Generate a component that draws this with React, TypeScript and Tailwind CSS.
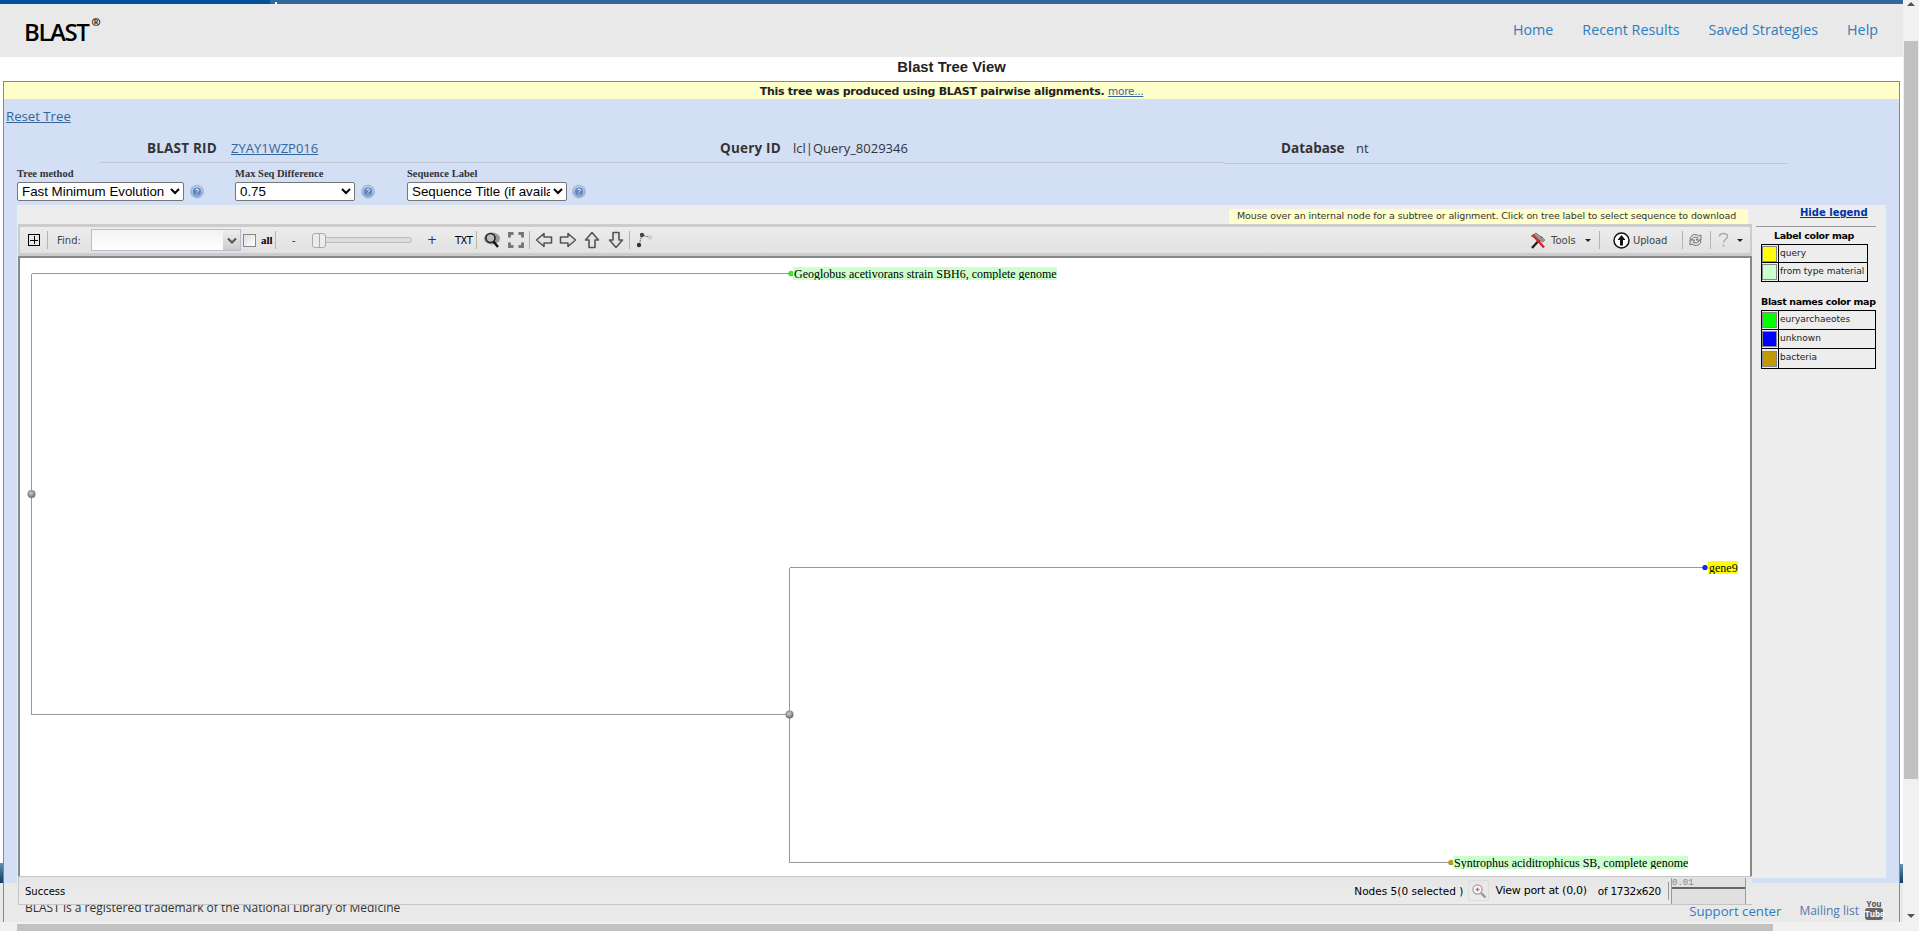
import React from "react";

const Sep = ({ className = "" }: { className?: string }) => <span className={`block w-px h-[18px] bg-[#b5b5a8] shrink-0 ${className}`} />;

function Help({ className = "" }: { className?: string }) {
  return (
    <svg width="14" height="15" viewBox="0 0 14 15" className={className}>
      <defs>
        <radialGradient id="hg" cx="50%" cy="40%" r="60%">
          <stop offset="0%" stopColor="#e8effa" />
          <stop offset="100%" stopColor="#7f9fce" />
        </radialGradient>
      </defs>
      <circle cx="7" cy="7.500" r="6.500" fill="url(#hg)" stroke="#a9bcdc" />
      <circle cx="7" cy="7.500" r="4" fill="#5f86bf" />
      <path d="M5.500 6.200c.2-1.500 3-1.500 3 .1 0 1-1.500 1-1.500 2.100M7 9.500v.9" stroke="#fff" strokeWidth="1" fill="none" />
    </svg>
  );
}

function Arrow({ rot }: { rot: number }) {
  return (
    <svg width="16" height="18" viewBox="0 0 16 18" style={{ transform: `rotate(${rot}deg)` }} className="shrink-0">
      <path d="M8 1.500 14.500 9H11v7.500H5V9H1.500Z" fill="#e4e4e4" stroke="#555" strokeWidth="1.600" strokeLinejoin="round" />
    </svg>
  );
}

function Caret() {
  return <span className="block w-0 h-0 border-l-[3px] border-r-[3px] border-t-[3px] border-l-transparent border-r-transparent border-t-[#222] shrink-0" />;
}

function Swatch({ color, label, w }: { color: string; label: string; w: string }) {
  return (
    <div className={`flex items-stretch border-b border-black last:border-b-0 ${w}`}>
      <div className="w-[15px] shrink-0 border-r border-black pr-px box-content flex items-center">
        <div className="w-[15px] h-[16px] border border-[#888]" style={{ backgroundColor: color }} />
      </div>
      <span className="pl-[1px] leading-[16px] text-[#222] whitespace-nowrap">{label}</span>
    </div>
  );
}

function TreeNode({ x, y, color }: { x: number; y: number; color: string }) {
  return <circle cx={x} cy={y} r="2.600" fill={color} stroke="#00000040" strokeWidth="0.5" />;
}

function TreeLabel({ x, y, bg, w, children }: { x: number; y: number; bg: string; w: number; children: React.ReactNode }) {
  return (
    <div
      className="absolute h-[13px] pl-px text-[12px] leading-[14px] text-black whitespace-nowrap font-['Liberation_Serif',serif] overflow-hidden"
      style={{ left: x, top: y, width: w, backgroundColor: bg }}
    >
      {children}
    </div>
  );
}

export default function App() {
  return (
    <div className="w-[1919px] h-[931px] overflow-hidden relative bg-white flex flex-col font-['Open_Sans',sans-serif]">
      <div className="flex flex-1 min-h-0">
        <div className="w-[1903px] flex flex-col shrink-0">
          {/* top strip */}
          <div className="h-[4px] flex shrink-0">
            <div className="w-[270px] bg-[#00529b]" />
            <div className="flex-1 bg-[#336699]" />
          </div>
          {/* header */}
          <header className="h-[53px] bg-[#e9e9e9] flex items-start justify-between shrink-0">
            <div className="pl-[24px] pt-[12px] flex items-start text-black">
              <span className="text-[24px] leading-[32px] font-semibold tracking-[-1.4px]">BLAST</span>
              <span className="text-[11px] leading-[12px] font-bold ml-[3px]">®</span>
            </div>
            <nav className="flex gap-[29px] pr-[25px] pt-[16px] text-[14.3px] leading-[20px] text-[#2f7bbf]">
              <span>Home</span>
              <span>Recent Results</span>
              <span>Saved Strategies</span>
              <span>Help</span>
            </nav>
          </header>
          {/* title */}
          <h1 className="h-[24px] shrink-0 text-center text-[14.8px] leading-[20px] font-bold text-[#222] font-['Liberation_Sans',sans-serif]">
            Blast Tree View
          </h1>
          {/* panel */}
          <main className="relative z-10 ml-[3px] w-[1897px] h-[802px] shrink-0 border-t border-l border-r border-[#888] bg-[#d3dff5]">
            <div className="h-[17px] bg-[#ffffcc] text-center text-[11px] leading-[18px] font-bold text-[#222] font-['DejaVu_Sans',sans-serif] tracking-[-0.27px]">
              This tree was produced using BLAST pairwise alignments.{" "}
              <span className="font-normal text-[#336699] underline text-[10.5px]">more...</span>
            </div>
            <div className="h-[36px] pl-[2px] pt-[8px] text-[13.2px] leading-[18px]">
              <span className="text-[#336699] underline">Reset Tree</span>
            </div>
            <div className="ml-[95px] flex h-[29px] text-[13px] leading-[26px] text-[#333]">
              <div className="w-[485px] pl-[48px] flex border-b border-[#bfc7d4] h-[28px]">
                <span className="w-[84px] font-bold text-[13.5px] tracking-[0.2px]">BLAST RID</span>
                <span className="text-[#336699] underline">ZYAY1WZP016</span>
              </div>
              <div className="w-[640px] pl-[136px] flex border-b border-[#bfc7d4] h-[28px]">
                <span className="w-[73px] font-bold text-[13.5px] tracking-[0.2px]">Query ID</span>
                <span>lcl|Query_8029346</span>
              </div>
              <div className="w-[563px] pl-[57px] flex border-b border-[#bfc7d4] h-[29px]">
                <span className="w-[75px] font-bold text-[13.5px]">Database</span>
                <span>nt</span>
              </div>
            </div>
            <div className="flex pl-[13px] h-[41px] font-['Liberation_Serif',serif] text-[10.5px] font-bold text-[#333]">
              <div className="w-[218px]">
                <div className="h-[18px] leading-[19px]">Tree method</div>
                <div className="flex items-center gap-[6px]">
                  <select defaultValue="a" className="w-[167px] h-[19px] border border-[#767676] rounded-[2px] bg-white text-[13.33px] font-normal text-black font-['Liberation_Sans',sans-serif]">
                    <option value="a">Fast Minimum Evolution</option>
                  </select>
                  <Help />
                </div>
              </div>
              <div className="w-[172px]">
                <div className="h-[18px] leading-[19px]">Max Seq Difference</div>
                <div className="flex items-center gap-[6px]">
                  <select defaultValue="a" className="w-[120px] h-[19px] border border-[#767676] rounded-[2px] bg-white text-[13.33px] font-normal text-black font-['Liberation_Sans',sans-serif]">
                    <option value="a">0.75</option>
                  </select>
                  <Help />
                </div>
              </div>
              <div>
                <div className="h-[18px] leading-[19px]">Sequence Label</div>
                <div className="flex items-center gap-[5px]">
                  <select defaultValue="a" className="w-[160px] h-[19px] border border-[#767676] rounded-[2px] bg-white text-[13.33px] font-normal text-black font-['Liberation_Sans',sans-serif]">
                    <option value="a">Sequence Title (if available)</option>
                  </select>
                  <Help />
                </div>
              </div>
            </div>
            {/* tree widget */}
            <div className="ml-[13px] flex items-start w-[1869px]">
              <div className="w-[1735px] shrink-0 bg-[#ededed]">
                <div className="h-[19px] flex justify-end pr-[4px] pt-[4px]">
                  <div className="w-[519px] h-[15px] bg-[#ffffcc] text-[9.5px] leading-[14px] text-[#333] pl-[8px] whitespace-nowrap font-['DejaVu_Sans',sans-serif] tracking-[-0.1px]">
                    Mouse over an internal node for a subtree or alignment. Click on tree label to select sequence to download
                  </div>
                </div>
                <div className="h-[32px] ml-px border-t-[3px] border-b-[3px] border-l-2 border-[#cccccc] border-r-2 bg-gradient-to-b from-[#ececec] to-[#e2e2e2] flex items-center text-[10px] text-[#333] font-['DejaVu_Sans',sans-serif]">
                  <div className="flex items-center flex-1 pl-[8px]">
                    <span className="w-[12px] h-[12px] border border-black flex items-center justify-center relative shrink-0">
                      <span className="absolute w-[8px] h-px bg-black" />
                      <span className="absolute h-[8px] w-px bg-black" />
                    </span>
                    <Sep className="ml-[7px]" />
                    <span className="ml-[9px] w-[34px] text-[#444]">Find:</span>
                    <div className="w-[150px] h-[22px] border border-[#b8bdd0] bg-gradient-to-b from-[#f2f2f2] to-white flex justify-end shrink-0">
                      <span className="w-[17px] bg-gradient-to-b from-[#eee] to-[#ccc] flex items-center justify-center">
                        <svg width="10" height="7" viewBox="0 0 10 7"><path d="M1 1.500 5 5.500 9 1.500" stroke="#555" strokeWidth="2" fill="none" /></svg>
                      </span>
                    </div>
                    <span className="ml-[2px] w-[13px] h-[13px] border border-[#888] bg-gradient-to-br from-[#ddd] to-white shrink-0" />
                    <span className="ml-[5px] font-['Liberation_Serif',serif] font-bold text-[11px] text-black w-[13px]">all</span>
                    <Sep className="ml-[1px]" />
                    <span className="ml-[16px] w-[20px] text-[#333]">-</span>
                    <div className="flex items-center relative w-[100px] h-[16px]">
                      <div className="absolute left-[5px] right-0 h-[6px] rounded-[3px] border border-[#bbb] bg-[#ddd]" />
                      <div className="relative w-[14px] h-[15px] rounded-[3px] border border-[#aaa] bg-[#ececec] flex justify-center">
                        <span className="w-px h-full bg-[#aaa]" />
                      </div>
                    </div>
                    <span className="ml-[15px] w-[28px] text-[12px] leading-[12px] text-[#333]">+</span>
                    <span className="text-black text-[10px] w-[21px] tracking-[-0.5px]">TXT</span>
                    <Sep />
                    <svg width="18" height="18" viewBox="0 0 18 18" className="ml-[6px] shrink-0">
                      <ellipse cx="9" cy="7.500" rx="8" ry="6" fill="#999" />
                      <circle cx="7.500" cy="7" r="4.500" fill="#bbb" stroke="#222" strokeWidth="1.600" />
                      <path d="M10.500 10.500 15 16" stroke="#111" strokeWidth="2.400" />
                    </svg>
                    <svg width="16" height="16" viewBox="0 0 16 16" className="ml-[7px] shrink-0">
                      <path d="M1.500 5.500v-4h4M10.500 1.500h4v4M14.500 10.500v4h-4M5.500 14.500h-4v-4" fill="none" stroke="#777" strokeWidth="3" />
                    </svg>
                    <Sep className="ml-[5px]" />
                    <span className="ml-[6px] flex"><Arrow rot={-90} /></span>
                    <span className="ml-[8px] flex"><Arrow rot={90} /></span>
                    <span className="ml-[8px] flex"><Arrow rot={0} /></span>
                    <span className="ml-[8px] flex"><Arrow rot={180} /></span>
                    <Sep className="ml-[5px]" />
                    <svg width="17" height="17" viewBox="0 0 17 17" className="ml-[6px] shrink-0">
                      <path d="M3 13 6 3 14 5.500" fill="none" stroke="#855" strokeWidth="1" strokeDasharray="2 1" />
                      <circle cx="6" cy="3" r="2.200" fill="#444" />
                      <circle cx="14" cy="5.500" r="2.200" fill="#ccc" />
                      <circle cx="3" cy="13" r="2.200" fill="#333" />
                    </svg>
                  </div>
                  <div className="flex items-center pr-[7px] text-[#444]">
                    <svg width="16" height="17" viewBox="0 0 16 17" className="shrink-0">
                      <path d="M2 16 12 5" stroke="#222" strokeWidth="2.400" />
                      <path d="M1 4 6 1l9 7-2 2Z" fill="#999" stroke="#555" strokeWidth=".6" />
                      <path d="M3 3 14 15.500" stroke="#d22" strokeWidth="2.400" />
                    </svg>
                    <span className="ml-[5px] w-[34px]">Tools</span>
                    <Caret />
                    <Sep className="ml-[8px]" />
                    <svg width="17" height="17" viewBox="0 0 17 17" className="ml-[13px] shrink-0">
                      <circle cx="8.500" cy="8.500" r="7.500" fill="#fff" stroke="#111" strokeWidth="1.500" />
                      <path d="M8.500 3 12.500 8H10v5.500H7V8H4.500Z" fill="#111" />
                    </svg>
                    <span className="ml-[3px] w-[49px] tracking-[-0.15px]">Upload</span>
                    <Sep />
                    <svg width="15" height="16" viewBox="0 0 15 16" className="ml-[5px] shrink-0">
                      <path d="M2 7c.5-4 5-6 9-3l2-1v5H8l2-2C7.500 4.500 4.500 5 4 7.500ZM13 9c-.5 4-5 6-9 3l-2 1V8h5l-2 2c2.500 1.500 5.500 1 6-1.500Z" fill="#e4e4e4" stroke="#666" strokeWidth=".9" />
                    </svg>
                    <Sep className="ml-[7px]" />
                    <svg width="11" height="16" viewBox="0 0 11 16" className="ml-[7px] shrink-0">
                      <path d="M1.500 4.500C1.500 0.500 9.500 0.500 9.500 4.500 9.500 7.500 5.500 7.500 5.500 10.500M5.500 12.500v2" fill="none" stroke="#aaa" strokeWidth="1.500" />
                    </svg>
                    <span className="ml-[8px] flex"><Caret /></span>
                  </div>
                </div>
                {/* canvas */}
                <div className="relative h-[620px] ml-px bg-white border-t-2 border-l-2 border-r-2 border-[#888]">
                  <svg width="1730" height="618" className="absolute left-0 top-0" shapeRendering="crispEdges">
                    <defs>
                      <radialGradient id="ball" cx="45%" cy="40%" r="60%">
                        <stop offset="0%" stopColor="#d0d0d0" />
                        <stop offset="100%" stopColor="#666" />
                      </radialGradient>
                    </defs>
                    <path
                      d="M11.500 15.500H769.500M11.500 15.500V456.500M11.500 456.500H769.500M769.500 309.500V604.500M769.500 309.500H1684.500M769.500 604.500H1429.500"
                      fill="none"
                      stroke="#999"
                    />
                    <g shapeRendering="auto">
                      <TreeNode x={771} y={15.5} color="#33ee33" />
                      <TreeNode x={1685} y={309.5} color="#2222ee" />
                      <TreeNode x={1431} y={604.5} color="#c0a010" />
                      <circle cx="11.500" cy="236" r="4" fill="url(#ball)" />
                      <circle cx="769.500" cy="456.500" r="4" fill="url(#ball)" />
                    </g>
                  </svg>
                  <TreeLabel x={773} y={9} bg="#ccffcc" w={264}>Geoglobus acetivorans strain SBH6, complete genome</TreeLabel>
                  <TreeLabel x={1688} y={303} bg="#ffff00" w={30}>gene9</TreeLabel>
                  <TreeLabel x={1433} y={598} bg="#ccffcc" w={235}>Syntrophus aciditrophicus SB, complete genome</TreeLabel>
                </div>
                {/* status bar */}
                <div className="h-[29px] ml-px border-t border-b border-l border-[#c4c4c4] bg-gradient-to-b from-[#e6e6e6] to-[#ececec] flex items-center text-[10px] text-black font-['DejaVu_Sans',sans-serif]">
                  <span className="ml-[6px] pt-[2px]">Success</span>
                  <div className="ml-auto flex items-center">
                    <span className="pt-[2px] text-[10.5px] tracking-[0.02px]">Nodes 5(0 selected )</span>
                    <span className="ml-[5px] w-[21px] h-[21px] border border-[#ddd] rounded-[2px] flex items-center justify-center">
                      <svg width="16" height="16" viewBox="0 0 16 16">
                        <circle cx="6.500" cy="6.500" r="4.500" fill="#fff" stroke="#aaa" strokeWidth="1.500" />
                        <path d="M10 10 14.500 14.500" stroke="#999" strokeWidth="2.400" />
                        <path d="M4.500 6.500h4M6.500 4.500v4" stroke="#d66" strokeWidth="1.500" />
                      </svg>
                    </span>
                    <span className="ml-[6px] pt-[2px] text-[11px] tracking-[-0.27px]">View port at (0,0)</span>
                    <span className="ml-[11px] pt-[2px] text-[10.5px] tracking-[-0.3px]">of 1732x620</span>
                    <span className="ml-[7px] w-px h-[18px] bg-[#999]" />
                    <div className="ml-[2px] mr-[6px] relative w-[75px] h-[26px] bg-[#e0e0e0] border-l border-r border-[#999] font-['Liberation_Mono',monospace] text-[9px] leading-[10px] text-[#888]">
                      0.01
                      <div className="absolute left-0 right-0 top-[9px] h-[2px] bg-[#666]" />
                    </div>
                  </div>
                </div>
              </div>
              {/* legend */}
              <aside className="w-[134px] h-[673px] bg-[#ededed] text-[9px] font-['DejaVu_Sans',sans-serif]">
                <div className="h-[21px] pl-[48px] pt-[1px] text-[10px] leading-[14px] font-bold text-[#0033aa] underline">Hide legend</div>
                <div className="ml-[4px] w-[120px] border-t border-[#999] pt-[2px]">
                  <div className="pl-[18px] h-[15px] text-[9.5px] leading-[14px] font-bold text-black tracking-[-0.35px] whitespace-nowrap">Label color map</div>
                  <div className="ml-[5px] w-[107px] border border-black">
                    <Swatch color="#ffff00" label="query" w="h-[18px]" />
                    <Swatch color="#ccffcc" label="from type material" w="h-[18px]" />
                  </div>
                  <div className="ml-[5px] mt-[11px] h-[17px] text-[9.5px] leading-[17px] font-bold text-black whitespace-nowrap tracking-[-0.35px]">Blast names color map</div>
                  <div className="ml-[5px] w-[115px] border border-black">
                    <Swatch color="#00ff00" label="euryarchaeotes" w="h-[19px]" />
                    <Swatch color="#0000ff" label="unknown" w="h-[19px]" />
                    <Swatch color="#c09a00" label="bacteria" w="h-[19px]" />
                  </div>
                </div>
              </aside>
            </div>
          </main>
          {/* footer */}
          <footer className="h-[39px] bg-[#e9e9e9] shrink-0">
            <div className="ml-[3px] w-[1897px] h-full border-l border-r border-[#888] flex text-[#444]">
              <span className="ml-[21px] mt-[17px] text-[12px] leading-[16px] h-[16px] text-[#333]">BLAST is a registered trademark of the National Library of Medicine</span>
              <span className="ml-auto mt-[19px] text-[13.2px] leading-[18px] text-[#2f7bbf] z-20">Support center</span>
              <span className="ml-[18px] mt-[20px] text-[12px] leading-[16px] text-[#5577aa] z-20">Mailing list</span>
              <div className="ml-[6px] mr-[16px] mt-[16px] z-20 flex flex-col items-center w-[18px] relative">
                <span className="text-[8px] leading-[9px] font-bold text-[#555]">You</span>
                <span className="w-[18px] h-[12px] rounded-[3px] bg-[#666] text-white text-[8px] leading-[12px] font-bold text-center">Tube</span>
              </div>
            </div>
          </footer>
        </div>
        {/* vertical scrollbar */}
        <div className="w-[16px] bg-[#f1f1f1] flex flex-col items-center shrink-0">
          <span className="mt-[2px] w-0 h-0 border-l-[4px] border-r-[4px] border-b-[4px] border-l-transparent border-r-transparent border-b-[#555]" />
          <div className="mt-[35px] w-[14px] h-[738px] bg-[#c1c1c1]" />
          <span className="mt-auto mb-[4px] w-0 h-0 border-l-[4px] border-r-[4px] border-t-[4px] border-l-transparent border-r-transparent border-t-[#555]" />
        </div>
      </div>
      {/* horizontal scrollbar */}
      <div className="h-[9px] bg-[#f1f1f1] flex items-end shrink-0">
        <div className="ml-[17px] w-[1756px] h-[7px] bg-[#c1c1c1]" />
      </div>
      {/* background peek at page edges */}
      <div className="absolute left-[275px] top-[2px] w-[2px] h-[2px] bg-white" />
      <div className="absolute left-0 top-[863px] w-[3px] h-[20px] bg-gradient-to-b from-[#5f97a8] to-[#123a66]" />
      <div className="absolute left-[1900px] top-[864px] w-[3px] h-[19px] bg-gradient-to-b from-[#5f97a8] to-[#123a66]" />
    </div>
  );
}
